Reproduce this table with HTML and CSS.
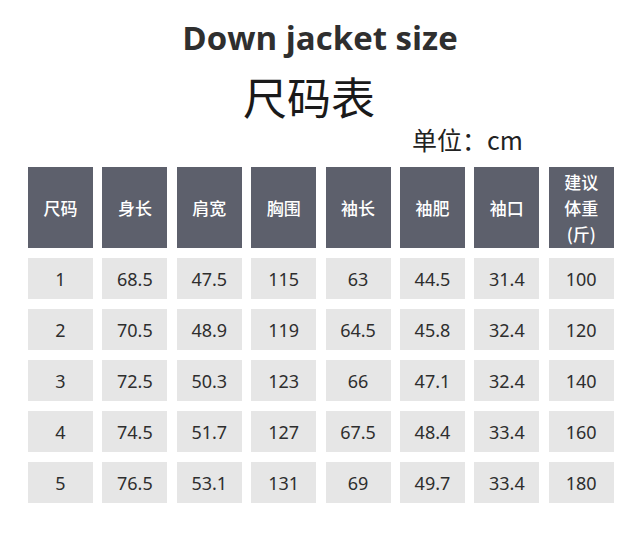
FILE: index.html
```html
<!DOCTYPE html>
<html lang="zh">
<head>
<meta charset="utf-8">
<link rel="stylesheet" href="styles.css">
</head>
<body>
<div class="page">
  <h1 class="title">Down jacket size</h1>
  <div class="subtitle">尺码表</div>
  <div class="unit">单位：cm</div>
  <div class="table">
    <div class="th">尺码</div>
    <div class="th">身长</div>
    <div class="th">肩宽</div>
    <div class="th">胸围</div>
    <div class="th">袖长</div>
    <div class="th">袖肥</div>
    <div class="th">袖口</div>
    <div class="th th-multi">建议<br>体重<br>(斤)</div>

    <div class="td">1</div><div class="td">68.5</div><div class="td">47.5</div><div class="td">115</div><div class="td">63</div><div class="td">44.5</div><div class="td">31.4</div><div class="td">100</div>
    <div class="td">2</div><div class="td">70.5</div><div class="td">48.9</div><div class="td">119</div><div class="td">64.5</div><div class="td">45.8</div><div class="td">32.4</div><div class="td">120</div>
    <div class="td">3</div><div class="td">72.5</div><div class="td">50.3</div><div class="td">123</div><div class="td">66</div><div class="td">47.1</div><div class="td">32.4</div><div class="td">140</div>
    <div class="td">4</div><div class="td">74.5</div><div class="td">51.7</div><div class="td">127</div><div class="td">67.5</div><div class="td">48.4</div><div class="td">33.4</div><div class="td">160</div>
    <div class="td">5</div><div class="td">76.5</div><div class="td">53.1</div><div class="td">131</div><div class="td">69</div><div class="td">49.7</div><div class="td">33.4</div><div class="td">180</div>
  </div>
</div>
</body>
</html>
```

FILE: styles.css
```css
html, body {
  margin: 0;
  padding: 0;
  background: #ffffff;
}

.page {
  width: 640px;
  height: 553px;
  font-family: "Noto Sans", "Noto Sans CJK SC", sans-serif;
  color: #333333;
  padding-top: 14px;
  box-sizing: border-box;
}

.title {
  margin: 0;
  text-align: center;
  font-family: "Open Sans", "Noto Sans", sans-serif;
  font-weight: 700;
  font-size: 33px;
  line-height: 48px;
  color: #2f2f2f;
}

.subtitle {
  margin-top: 9px;
  text-align: center;
  padding-right: 22px;
  font-family: "Noto Sans CJK SC", sans-serif;
  font-size: 44px;
  line-height: 50px;
  color: #1a1a1a;
}

.unit {
  text-align: right;
  padding-right: 117px;
  font-family: "Noto Sans CJK SC", sans-serif;
  font-size: 25px;
  line-height: 36px;
  color: #222222;
}

.table {
  margin-top: 10px;
  margin-left: 28px;
  display: grid;
  grid-template-columns: repeat(8, 65px);
  grid-template-rows: 81px repeat(5, 41px);
  column-gap: 9.4px;
  row-gap: 10px;
}

.th {
  background: #5d606c;
  color: #ffffff;
  font-family: "Noto Sans CJK SC", sans-serif;
  font-weight: 500;
  font-size: 17px;
  display: flex;
  align-items: center;
  justify-content: center;
  text-align: center;
}

.th-multi {
  line-height: 26px;
  padding-top: 1px;
}

.td {
  background: #e6e6e6;
  display: flex;
  align-items: center;
  justify-content: center;
  font-family: "Noto Sans", sans-serif;
  font-size: 18px;
  color: #2e2e2e;
}
```
